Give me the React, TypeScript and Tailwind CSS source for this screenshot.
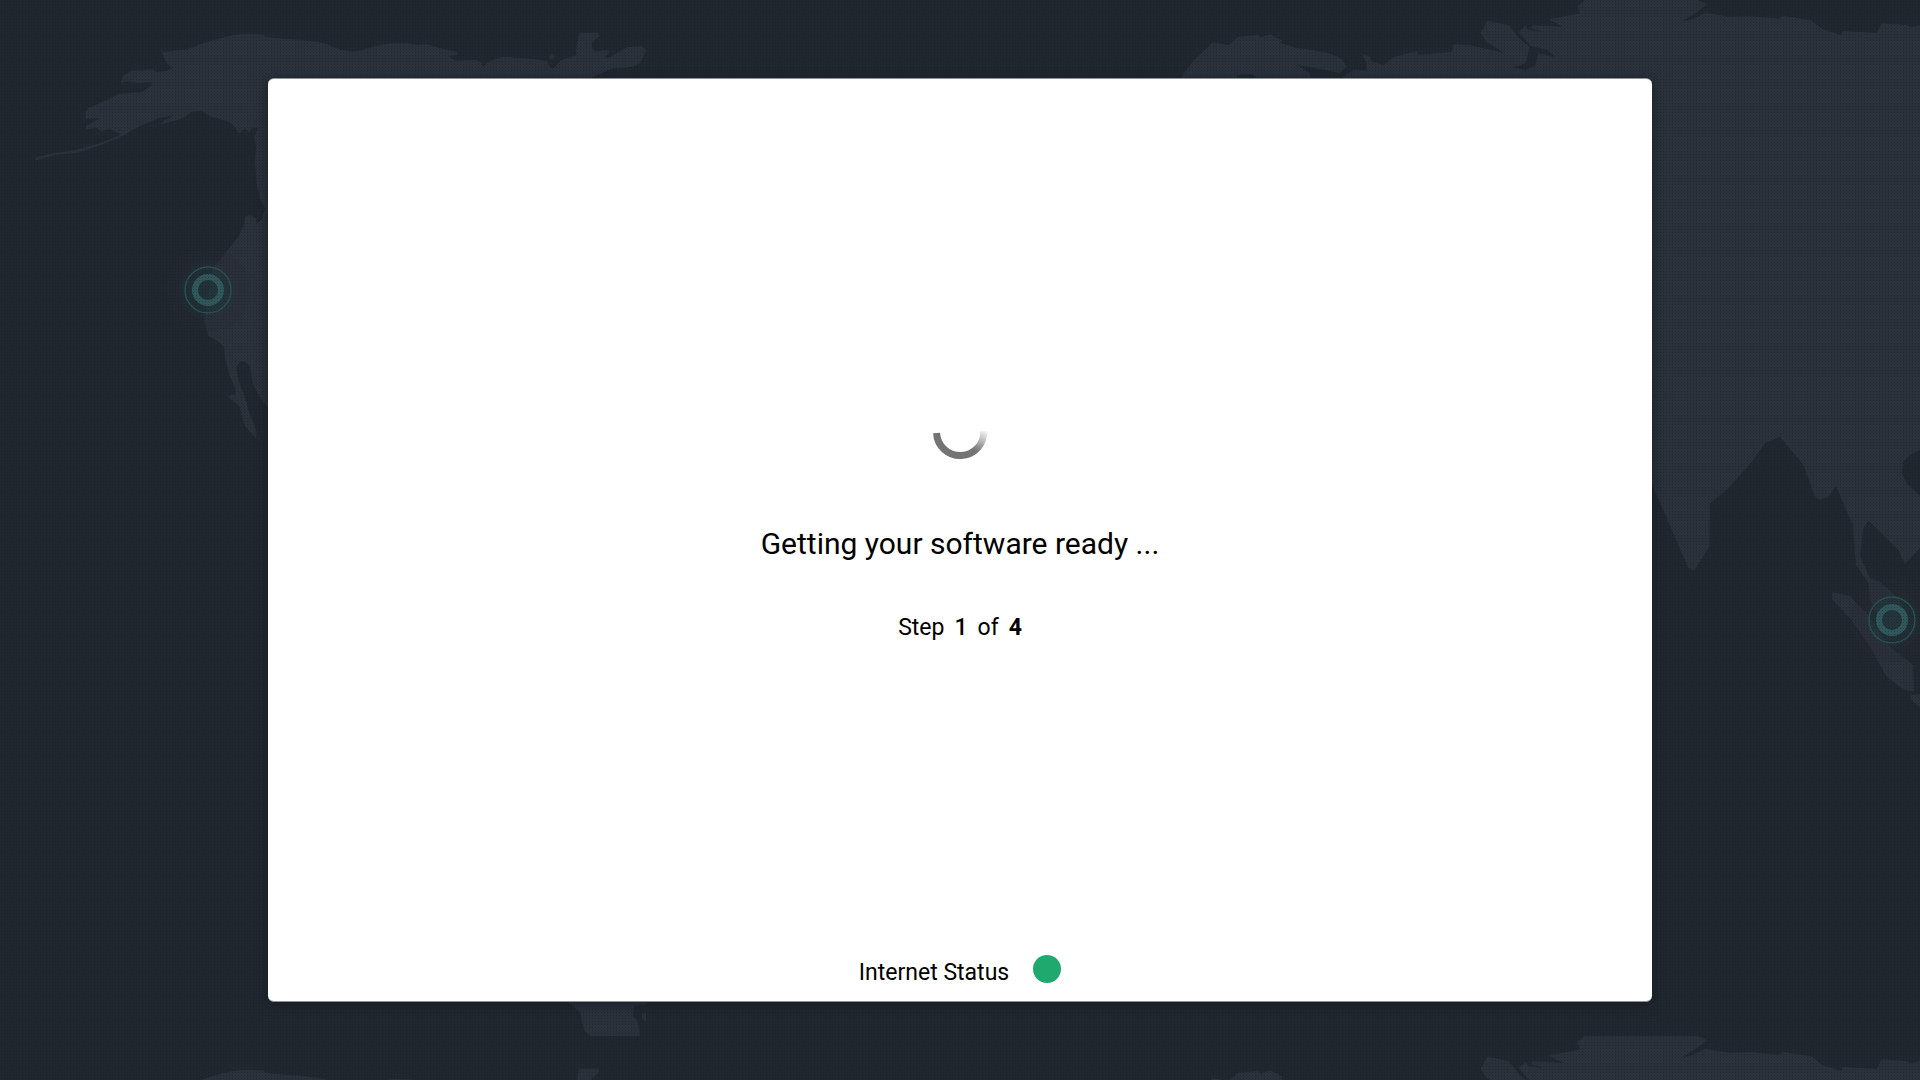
function Marker({ x, y }: { x: number; y: number }) {
  return (
    <g transform={`translate(${x} ${y})`}>
      <circle r="42" fill="#2b2833" opacity="0.3" />
      <circle r="32" fill="url(#glow)" />
      <circle r="23" fill="none" stroke="#2a4e4f" strokeWidth="1.6" />
      <circle r="13" fill="none" stroke="#30575a" strokeWidth="6" />
    </g>
  );
}

function Landmasses() {
  return (
    <g fill="#2a313b">
      {/* Alaska, Canada and the west coast of North America */}
      <g transform="scale(0.33333)">
        <path d="M485 157L560 148C620 125 680 103 740 101L790 103L795 110C860 118 920 118 975 130C1010 145 1035 158 1075 153C1120 142 1165 125 1200 130L1230 130L1250 135L1280 133L1330 147L1370 155L1372 166L1345 168L1365 182L1430 180L1445 188L1450 202L1460 190C1490 172 1510 170 1530 172L1600 177L1640 183L1650 200L1660 205L1680 182L1730 165L1728 155L1733 120L1737 98L1795 98L1798 108L1775 128L1776 145L1785 155L1815 150L1830 153L1815 175L1830 172L1880 142L1920 138L1935 145L1938 155L1920 190L1900 200L1870 203L1840 205L1800 222L1760 240L805 240L805 1225L775 1185L758 1150L750 1100L738 1085L720 1085L710 1100L715 1140L735 1190L745 1230L770 1295L768 1315L750 1295L733 1275L725 1245L720 1220L700 1205L685 1190L695 1182L706 1185L704 1160L688 1125L676 1080L672 1040L655 1025L625 1008L612 960L625 880L640 800L675 760L715 710L733 670L735 650L750 645L768 655L770 672L785 658L795 625L780 595L770 550L765 490L768 440L762 410L775 385L755 383L750 398L735 386L715 400L700 375L680 363L632 350L605 332L575 335L550 355L480 374L495 360L520 348L480 353L420 378L360 412L300 436L235 458L165 465L105 482L108 472L160 460L225 450L290 433L350 410L362 402L330 388L302 394L290 384L258 388L258 378L300 355L258 357L255 338L265 325L320 300L355 282L425 276L455 256L455 247L415 250L385 244L362 248L370 226L395 212L460 208L470 216L500 212L515 203L500 190Z" />
        <circle cx="1656" cy="170" r="8" />
      </g>

      {/* Scandinavia and the northern coast of Asia */}
      <g transform="translate(1150 0) scale(0.4911 0.33333)">
        <path d="M62 240C75 195 105 160 128 127L160 135L180 110L220 105L225 112L245 103L270 122L265 128L300 145C340 150 375 160 390 178L402 200L385 220L350 208L300 195L325 220L330 240Z" />
        <path d="M385 240L415 208L440 212L440 188L432 162L448 170L450 182L475 196L495 172L545 152L545 165L615 155L618 133L650 135L720 158L685 125L673 98L687 62L730 75L755 120L773 140L765 190L740 202L765 210L785 195L790 160L825 172L810 150L775 138L750 95L765 78L770 90L800 95L775 84L780 76L840 80L812 58L875 40L870 18L885 0L1115 0L1135 12L1110 40L1085 62L1100 60L1130 38L1180 50L1225 48L1280 56L1290 48L1345 60L1370 88L1408 106L1410 93L1480 98L1490 70L1540 75L1550 82L1568 76L1568 1240L960 1240L960 240Z" />
        <ellipse cx="196" cy="231" rx="19" ry="8" fill="#20282f" />
      </g>

      {/* India, Indochina and Sumatra */}
      <g transform="translate(1640 400) scale(0.33333)">
        <path d="M36 -10H840V150L810 165L790 185L785 220L800 250L840 287V445L795 492L775 450L720 395L685 362L670 385L660 468L690 535L720 545L770 590L805 640L800 690L750 700L720 660L690 600L685 550L648 495L638 375L610 310L588 258L565 290L540 300L525 290L490 195L420 110L375 130L340 180L260 270L210 310L208 440L162 512L145 505L100 400L36 255Z" />
        <path d="M577 575L630 588L680 640L750 740L820 795L822 875L790 868L740 830L690 740L630 655L577 600Z" />
        <path d="M812 885L840 882V920L812 900Z" />
      </g>

      {/* South America down to the southern edge */}
      <path d="M566 1000H649L646 1005L634 1006L633 1016L638 1022L640 1036H590L584 1030L580 1012L572 1005Z" />
      <path d="M642 1013L646 1013L646 1021L642 1019Z" />
    </g>
  );
}

function WorldMap() {
  return (
    <svg
      aria-hidden="true"
      className="absolute inset-0 -z-10 h-full w-full"
      viewBox="0 0 1920 1080"
      preserveAspectRatio="xMidYMid slice"
    >
      <defs>
        <pattern id="dots" width="3" height="3" patternUnits="userSpaceOnUse">
          <rect x="1" y="1" width="1" height="1" fill="#10171e" opacity="0.3" />
        </pattern>
        <radialGradient id="glow">
          <stop offset="0.5" stopColor="#1c3a3e" stopOpacity="0.5" />
          <stop offset="1" stopColor="#1c3a3e" stopOpacity="0" />
        </radialGradient>
      </defs>
      <rect width="1920" height="1080" fill="#20272f" />
      <Landmasses />
      <g transform="translate(0 1036)">
        <Landmasses />
      </g>
      <Marker x={208} y={290} />
      <Marker x={1892} y={620} />
      <rect width="1920" height="1080" fill="url(#dots)" />
    </svg>
  );
}

function Spinner() {
  return (
    <svg role="img" aria-label="Loading" className="h-14 w-14" viewBox="0 0 56 56">
      <defs>
        <linearGradient id="fade" gradientUnits="userSpaceOnUse" x1="42" y1="46" x2="53" y2="25">
          <stop offset="0" stopColor="#747474" />
          <stop offset="1" stopColor="#747474" stopOpacity="0" />
        </linearGradient>
      </defs>
      <path d="M4.6 29A23.6 23.6 0 0 0 51.8 27" fill="none" stroke="url(#fade)" strokeWidth="7" />
    </svg>
  );
}

export default function App() {
  return (
    <div className="relative isolate flex min-h-screen overflow-hidden px-67 py-[78px] font-['Roboto',sans-serif] text-black">
      <WorldMap />
      <main className="flex flex-1 flex-col items-center rounded-md border-y border-[#8d9195] bg-white shadow-[0_2px_12px_rgba(15,20,30,0.6)]">
        <div className="flex flex-1 flex-col items-center justify-center pt-5">
          <Spinner />
          <h1 className="mt-16 text-[30px] leading-10">Getting your software ready ...</h1>
          <p className="mt-12 flex gap-2.5 text-[23px] leading-8">
            <span>Step</span>
            <strong className="font-medium">1</strong>
            <span>of</span>
            <strong className="font-bold">4</strong>
          </p>
        </div>
        <footer className="flex items-center gap-6 pb-3 text-[23px] leading-8">
          <span className="pt-2">Internet Status</span>
          <span className="h-7 w-7 rounded-full bg-[#20a96e]" />
        </footer>
      </main>
    </div>
  );
}
